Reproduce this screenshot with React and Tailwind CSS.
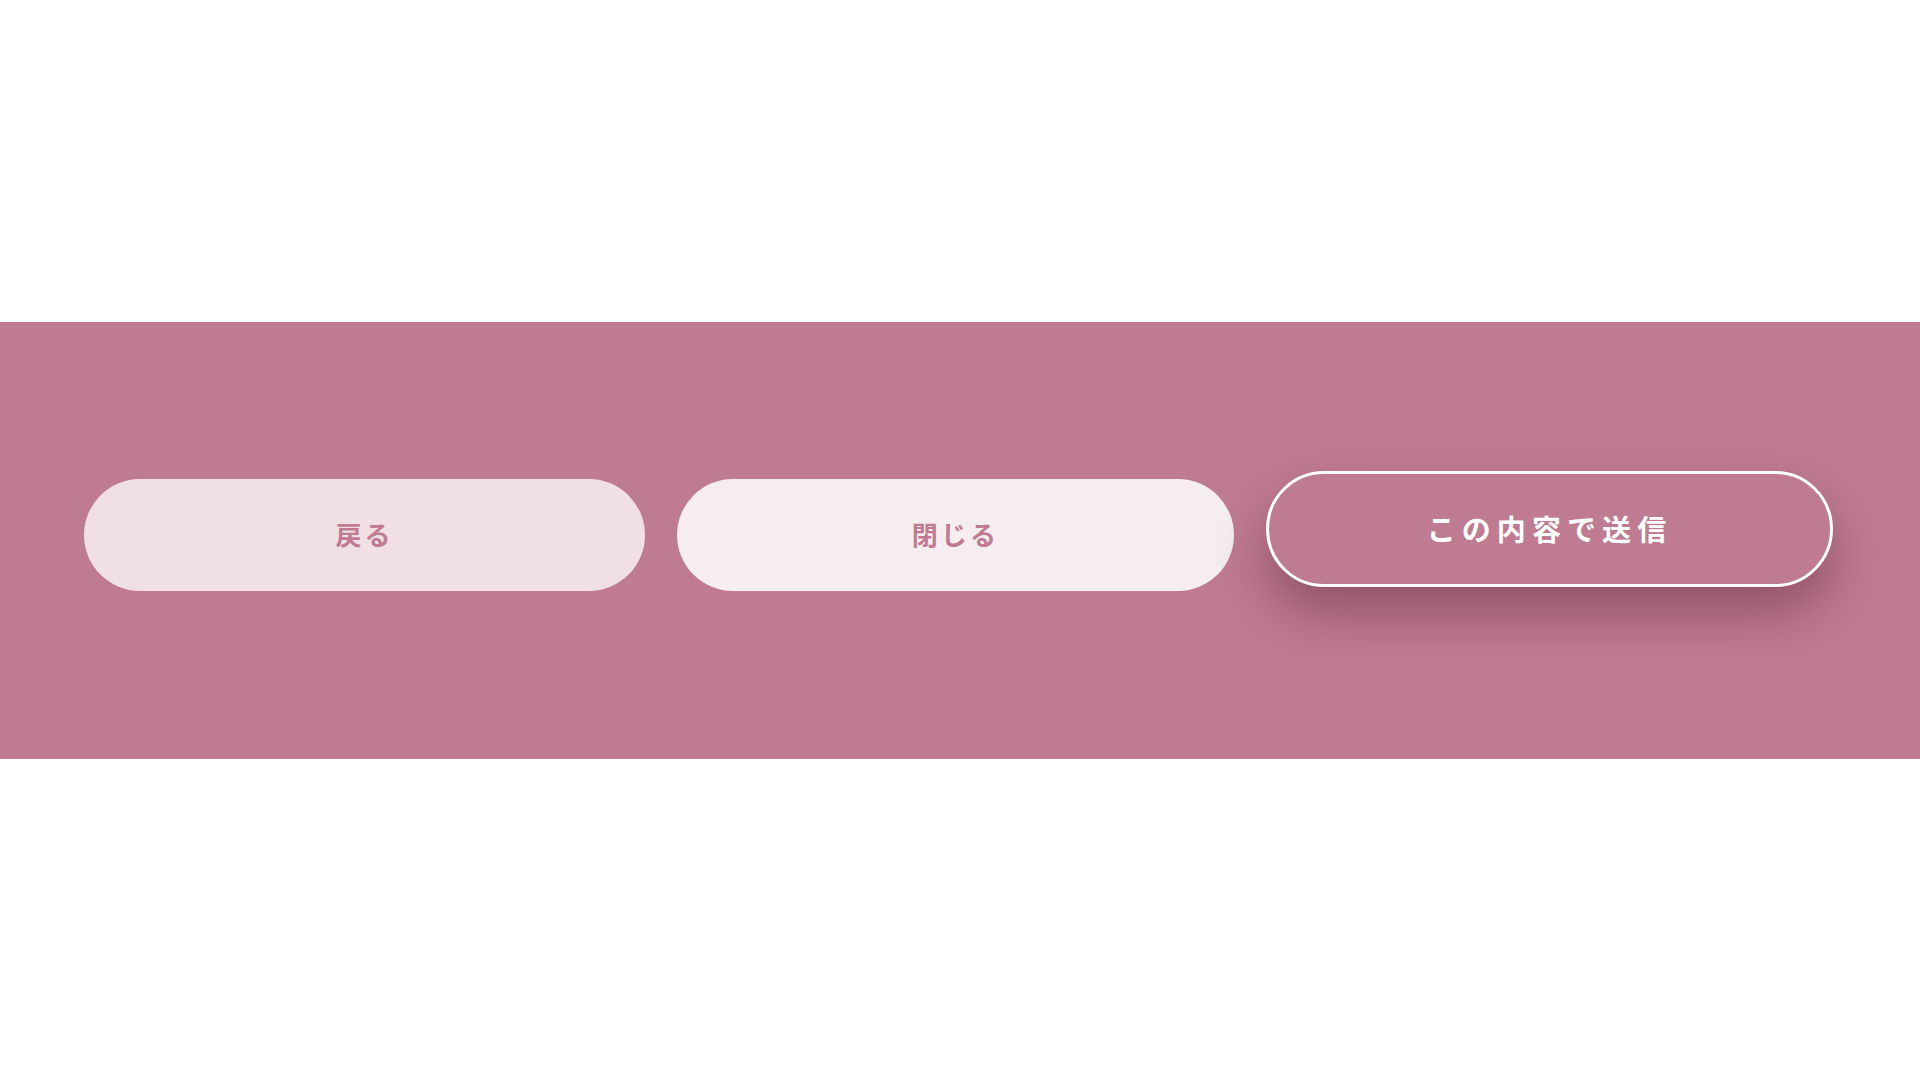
export default function App() {
  const font = { fontFamily: '"Noto Sans CJK JP", "Noto Sans", sans-serif' };
  return (
    <div className="w-[1920px] h-[1080px] bg-white flex flex-col" style={font}>
      <div className="h-[322px]" />
      <div className="h-[437px] bg-[#bf7b91] pl-[84px] pt-[157px]">
        <div className="flex gap-[32px] items-start">
          <button className="w-[561px] flex-none h-[112px] pb-[3px] rounded-full bg-[#f0e0e5] text-[#c07a91] text-[26px] font-bold tracking-[0.12em] flex items-center justify-center">
            戻る
          </button>
          <button className="w-[557px] flex-none h-[112px] pb-[3px] rounded-full bg-[#f5edf0] text-[#c07a91] text-[26px] font-bold tracking-[0.12em] flex items-center justify-center">
            閉じる
          </button>
          <button className="w-[567px] flex-none h-[116px] -mt-[8px] rounded-full bg-[#bf7b91] border-[3px] border-white text-white text-[29px] font-bold tracking-[0.21em] flex items-center justify-center shadow-[0_26px_50px_rgba(90,35,55,0.45)]">
            この内容で送信
          </button>
        </div>
      </div>
    </div>
  );
}
